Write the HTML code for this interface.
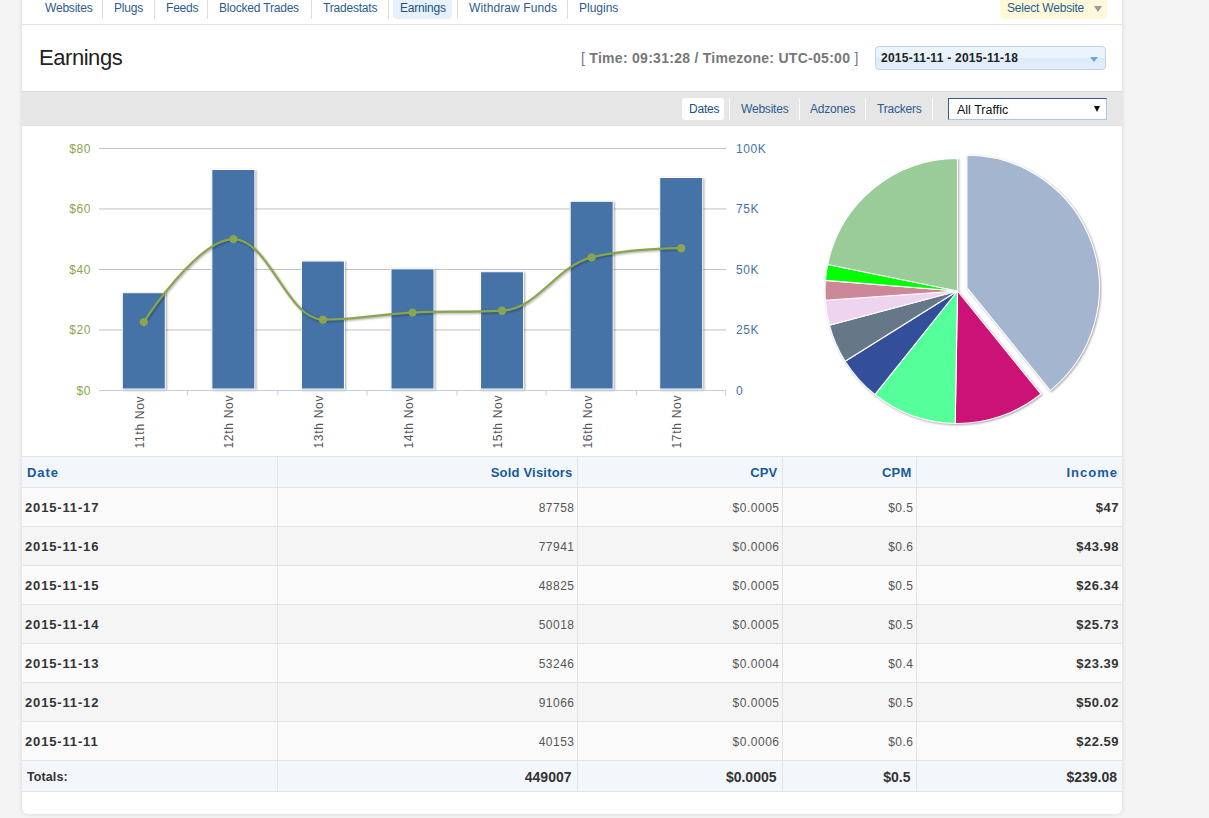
<!DOCTYPE html>
<html><head><meta charset="utf-8">
<style>
*{box-sizing:border-box}
html,body{margin:0;padding:0;width:1209px;height:818px;overflow:hidden}
body{background:#f4f4f5;font-family:"Liberation Sans",sans-serif;position:relative}
.panel{position:absolute;left:22px;top:-10px;width:1100px;height:824px;background:#fff;border-radius:0 0 6px 6px;box-shadow:0 0 5px rgba(0,0,0,.13)}
.abs{position:absolute}
.nav a{position:absolute;top:1px;font-size:12px;color:#2b5c8f;text-decoration:none;line-height:15px;white-space:nowrap;letter-spacing:-.2px}
.nav .sep{position:absolute;top:0;width:1px;height:19px;background:#dcdcdc}
.navline{position:absolute;left:22px;top:24px;width:1100px;height:1px;background:#e2e2e2}
.title{position:absolute;left:39px;top:45px;font-size:22px;color:#222;line-height:26px;letter-spacing:-.45px}
.time{position:absolute;left:581px;top:50px;font-size:14px;font-weight:bold;color:#777;line-height:16px;white-space:nowrap;letter-spacing:.28px}
.time b{font-weight:normal}
.datepick{position:absolute;left:875px;top:46px;width:231px;height:24px;border:1px solid #bfd5eb;border-radius:4px;background:linear-gradient(#ebf4fd 0,#e9f3fc 50%,#dcebf8 52%,#e4effa 100%);font-size:12px;font-weight:bold;color:#222;padding:4px 0 0 5px;letter-spacing:.25px}
.datepick i{position:absolute;left:214px;top:10px;width:0;height:0;border-left:4px solid transparent;border-right:4px solid transparent;border-top:5px solid #6aa9d8}
.bar{position:absolute;left:22px;top:91px;width:1100px;height:35px;background:#e6e6e6;border-top:1px solid #d9d9d9;border-bottom:1px solid #dedede}
.tabs a{position:absolute;top:102px;font-size:12px;color:#2b5c8f;line-height:15px;white-space:nowrap;letter-spacing:-.2px}
.tabs .sep{position:absolute;top:98px;width:1px;height:22px;background:#fafafa}
.pill{position:absolute;left:682px;top:98px;width:42px;height:22px;background:#fff;border-radius:3px}
.sel{position:absolute;left:948px;top:98px;width:159px;height:22px;background:#fff;border:1px solid #a8c8e8;border-top-color:#2e5d8e;border-left-color:#2e5d8e;font-size:12.5px;color:#111;padding:4px 0 0 8px}
.sel i{position:absolute;left:145px;top:7px;width:0;height:0;border-left:3.5px solid transparent;border-right:3.5px solid transparent;border-top:6px solid #111}
table{position:absolute;left:22px;top:456px;width:1100px;border-collapse:collapse;font-size:12px}
td,th{border:1px solid #e4e4e4;text-align:right;padding:0 4px 0 4px;white-space:nowrap}
th{height:31px;background:#f3f7fb;color:#175a9c;font-weight:bold;font-size:13px;padding-right:4px;letter-spacing:.2px}
td{height:39px;color:#555;padding-top:2px;padding-right:2px;letter-spacing:.5px}
tr.o td{background:#fafafa}
tr.e td{background:#f5f5f5}
td.d{text-align:left;font-weight:bold;color:#333;font-size:13px;letter-spacing:.85px;padding-left:3px;padding-top:1px}
td.i{font-weight:bold;color:#333;font-size:13px;letter-spacing:.5px;padding-right:3px;padding-top:1px}
tr.t td{background:#f3f7fb;height:31px;font-weight:bold;color:#333;font-size:14px;letter-spacing:0;padding-top:1px;padding-right:5px}
tr.t td.tl{font-size:12.5px;text-align:left;padding-left:5px;letter-spacing:.1px}
th:first-child,td:first-child{border-left:none}
th:last-child,td:last-child{border-right:none}
svg{position:absolute;left:0;top:0}
</style></head><body>
<div class="panel"></div>
<div class="nav">
<a style="left:45px">Websites</a><div class="sep" style="left:102px"></div>
<a style="left:114px">Plugs</a><div class="sep" style="left:154px"></div>
<a style="left:166px">Feeds</a><div class="sep" style="left:207px"></div>
<a style="left:219px">Blocked Trades</a><div class="sep" style="left:311px"></div>
<a style="left:323px">Tradestats</a><div class="sep" style="left:388px"></div>
<div class="abs" style="left:393px;top:0;width:59px;height:19px;background:#e6f1fc;border-radius:0 0 4px 4px"></div>
<a style="left:400px;color:#22507f">Earnings</a><div class="sep" style="left:457px"></div>
<a style="left:469px;letter-spacing:.1px">Withdraw Funds</a><div class="sep" style="left:567px"></div>
<a style="left:579px;letter-spacing:0">Plugins</a>
<div class="abs" style="left:1000px;top:0;width:107px;height:19px;background:#fef8da;border-radius:0 0 4px 4px"></div>
<a style="left:1007px">Select Website</a><div class="abs" style="left:1094px;top:6px;width:0;height:0;border-left:4px solid transparent;border-right:4px solid transparent;border-top:6px solid #9a9a9a"></div>
</div>
<div class="navline"></div>
<div class="title">Earnings</div>
<div class="time"><b>[</b> Time: 09:31:28 / Timezone: UTC-05:00 <b>]</b></div>
<div class="datepick">2015-11-11 - 2015-11-18<i></i></div>
<div class="bar"></div>
<div class="tabs">
<div class="pill"></div>
<a style="left:689px;color:#22507f">Dates</a><div class="sep" style="left:729px"></div>
<a style="left:741px">Websites</a><div class="sep" style="left:799px"></div>
<a style="left:810px">Adzones</a><div class="sep" style="left:865px"></div>
<a style="left:877px">Trackers</a><div class="sep" style="left:932px"></div>
</div>
<div class="sel">All Traffic<i></i></div>

<svg width="1209" height="818" viewBox="0 0 1209 818">
<defs>
<filter id="sh" x="-10%" y="-10%" width="130%" height="130%" color-interpolation-filters="sRGB"><feGaussianBlur in="SourceAlpha" stdDeviation="1.2"/><feOffset dx="1" dy="1"/><feComponentTransfer><feFuncA type="linear" slope="0.35"/></feComponentTransfer><feMerge><feMergeNode/><feMergeNode in="SourceGraphic"/></feMerge></filter>
</defs>
<g stroke="#c0c0c0" stroke-width="1">
<line x1="99" y1="148.45" x2="726" y2="148.45"/>
<line x1="99" y1="208.95" x2="726" y2="208.95"/>
<line x1="99" y1="269.45" x2="726" y2="269.45"/>
<line x1="99" y1="329.95" x2="726" y2="329.95"/>
</g>
<g font-size="12" fill="#89a54e" text-anchor="end" font-family="Liberation Sans" letter-spacing=".6" transform="translate(1,0)">
<text x="90" y="152.5">$80</text><text x="90" y="213">$60</text><text x="90" y="273.5">$40</text><text x="90" y="334">$20</text><text x="90" y="394.5">$0</text>
</g>
<g font-size="12" fill="#4572a7" text-anchor="start" font-family="Liberation Sans" letter-spacing=".6">
<text x="736" y="152.5">100K</text><text x="736" y="213">75K</text><text x="736" y="273.5">50K</text><text x="736" y="334">25K</text><text x="736" y="394.5">0</text>
</g>
<g id="bars"><rect x="122.29" y="292.73" width="43" height="96.27" fill="#4572a7" stroke="#fff" stroke-width="1" filter="url(#sh)"/><rect x="211.86" y="169.52" width="43" height="219.48" fill="#4572a7" stroke="#fff" stroke-width="1" filter="url(#sh)"/><rect x="301.43" y="261.04" width="43" height="127.96" fill="#4572a7" stroke="#fff" stroke-width="1" filter="url(#sh)"/><rect x="391.00" y="268.86" width="43" height="120.14" fill="#4572a7" stroke="#fff" stroke-width="1" filter="url(#sh)"/><rect x="480.57" y="271.74" width="43" height="117.26" fill="#4572a7" stroke="#fff" stroke-width="1" filter="url(#sh)"/><rect x="570.14" y="201.28" width="43" height="187.72" fill="#4572a7" stroke="#fff" stroke-width="1" filter="url(#sh)"/><rect x="659.71" y="177.53" width="43" height="211.47" fill="#4572a7" stroke="#fff" stroke-width="1" filter="url(#sh)"/></g>
<line x1="99" y1="390.45" x2="726" y2="390.45" stroke="#c0d0e0" stroke-width="1"/>
<g id="ticks"><line x1="187.5" y1="390" x2="187.5" y2="395.5" stroke="#c0d0e0"/><line x1="277.8" y1="390" x2="277.8" y2="395.5" stroke="#c0d0e0"/><line x1="367.0" y1="390" x2="367.0" y2="395.5" stroke="#c0d0e0"/><line x1="457.0" y1="390" x2="457.0" y2="395.5" stroke="#c0d0e0"/><line x1="546.1" y1="390" x2="546.1" y2="395.5" stroke="#c0d0e0"/><line x1="636.5" y1="390" x2="636.5" y2="395.5" stroke="#c0d0e0"/><line x1="725.5" y1="390" x2="725.5" y2="395.5" stroke="#c0d0e0"/><g font-size="12" fill="#555" font-family="Liberation Sans" text-anchor="start" letter-spacing=".7"><text transform="translate(143.8,448.5) rotate(-90)">11th Nov</text><text transform="translate(233.4,448.5) rotate(-90)">12th Nov</text><text transform="translate(322.9,448.5) rotate(-90)">13th Nov</text><text transform="translate(412.5,448.5) rotate(-90)">14th Nov</text><text transform="translate(502.1,448.5) rotate(-90)">15th Nov</text><text transform="translate(591.6,448.5) rotate(-90)">16th Nov</text><text transform="translate(681.2,448.5) rotate(-90)">17th Nov</text></g></g>
<g id="line"><path d="M 143.79 322.07 C 143.79 322.07 197.53 239.09 233.36 239.09 C 269.19 239.09 287.10 319.65 322.93 319.65 C 358.76 319.65 376.67 314.35 412.50 312.57 C 448.33 310.78 466.24 312.57 502.07 310.72 C 537.90 308.88 555.81 266.50 591.64 257.36 C 627.47 248.22 681.21 248.22 681.21 248.22" fill="none" stroke="#89a54e" stroke-width="2.2" filter="url(#sh)"/><circle cx="143.8" cy="322.1" r="4.2" fill="#89a54e"/><circle cx="233.4" cy="239.1" r="4.2" fill="#89a54e"/><circle cx="322.9" cy="319.6" r="4.2" fill="#89a54e"/><circle cx="412.5" cy="312.6" r="4.2" fill="#89a54e"/><circle cx="502.1" cy="310.7" r="4.2" fill="#89a54e"/><circle cx="591.6" cy="257.4" r="4.2" fill="#89a54e"/><circle cx="681.2" cy="248.2" r="4.2" fill="#89a54e"/></g>
<g id="pie" stroke="#fff" stroke-width="1.1" stroke-linejoin="round" filter="url(#sh)"><path d="M 966.93 155.16 A 132.5 132.5 0 0 1 1050.31 390.63 L 966.93 287.66 Z" fill="#a4b5cf"/><path d="M 1040.88 393.97 A 132.5 132.5 0 0 1 955.19 423.48 L 957.50 291.00 Z" fill="#cc1177"/><path d="M 955.19 423.48 A 132.5 132.5 0 0 1 874.84 394.55 L 957.50 291.00 Z" fill="#55ff99"/><path d="M 874.84 394.55 A 132.5 132.5 0 0 1 845.13 361.21 L 957.50 291.00 Z" fill="#334f99"/><path d="M 845.13 361.21 A 132.5 132.5 0 0 1 829.51 325.29 L 957.50 291.00 Z" fill="#667788"/><path d="M 829.51 325.29 A 132.5 132.5 0 0 1 825.32 300.24 L 957.50 291.00 Z" fill="#eed4ee"/><path d="M 825.32 300.24 A 132.5 132.5 0 0 1 825.43 280.37 L 957.50 291.00 Z" fill="#cc8899"/><path d="M 825.43 280.37 A 132.5 132.5 0 0 1 827.66 264.58 L 957.50 291.00 Z" fill="#00ff00"/><path d="M 827.66 264.58 A 132.5 132.5 0 0 1 957.50 158.50 L 957.50 291.00 Z" fill="#99cc99"/></g>
</svg>

<table>
<tr><th style="text-align:left;padding-left:5px;width:255px;letter-spacing:.9px">Date</th><th style="width:300px">Sold Visitors</th><th style="width:205px">CPV</th><th style="width:134px">CPM</th><th style="letter-spacing:1px">Income</th></tr>
<tr class="o"><td class="d">2015-11-17</td><td>87758</td><td>$0.0005</td><td>$0.5</td><td class="i">$47</td></tr>
<tr class="e"><td class="d">2015-11-16</td><td>77941</td><td>$0.0006</td><td>$0.6</td><td class="i">$43.98</td></tr>
<tr class="o"><td class="d">2015-11-15</td><td>48825</td><td>$0.0005</td><td>$0.5</td><td class="i">$26.34</td></tr>
<tr class="e"><td class="d">2015-11-14</td><td>50018</td><td>$0.0005</td><td>$0.5</td><td class="i">$25.73</td></tr>
<tr class="o"><td class="d">2015-11-13</td><td>53246</td><td>$0.0004</td><td>$0.4</td><td class="i">$23.39</td></tr>
<tr class="e"><td class="d">2015-11-12</td><td>91066</td><td>$0.0005</td><td>$0.5</td><td class="i">$50.02</td></tr>
<tr class="o"><td class="d">2015-11-11</td><td>40153</td><td>$0.0006</td><td>$0.6</td><td class="i">$22.59</td></tr>
<tr class="t"><td class="tl">Totals:</td><td>449007</td><td>$0.0005</td><td>$0.5</td><td>$239.08</td></tr>
</table>
</body></html>
